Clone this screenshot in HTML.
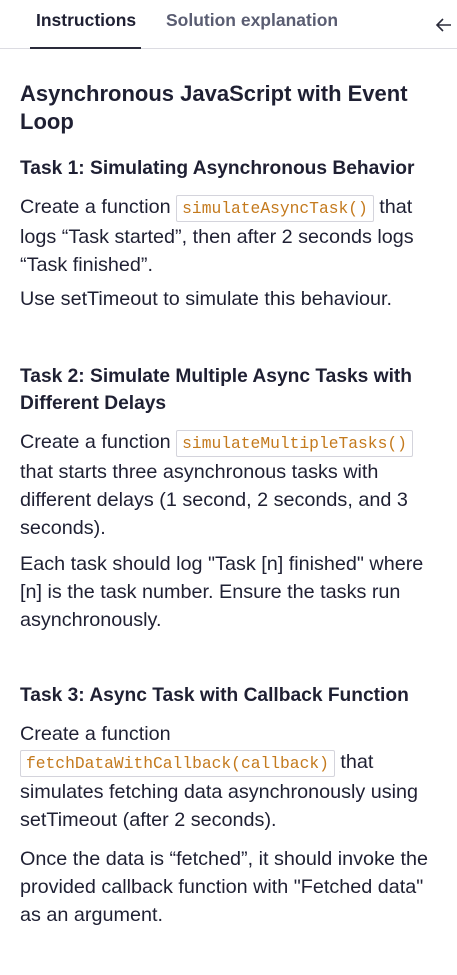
<!DOCTYPE html>
<html><head><meta charset="utf-8"><style>
body{margin:0;width:457px;height:975px;background:#fff;font-family:"Liberation Sans",sans-serif;color:#1f2033;position:relative;overflow:hidden}
.a{position:absolute;left:20px;white-space:nowrap}
.p{font-size:19.8px;line-height:28px}
.h{font-size:19.2px;font-weight:bold;line-height:27px}
code{font-family:"Liberation Mono",monospace;font-size:16.3px;color:#c47a1e;border:1px solid #d4d4dc;border-radius:2px;padding:3px 5px;background:#fff}
.tab{position:absolute;top:10px;font-size:17.5px;font-weight:bold}
</style></head><body>
<div class="tab" style="left:36px;color:#1f2033">Instructions</div>
<div class="tab" style="left:166px;color:#5a5d72">Solution explanation</div>
<svg style="position:absolute;left:434px;top:15px" width="20" height="20" viewBox="0 0 20 20"><path d="M17 10H3M9 4L3 10l6 6" fill="none" stroke="#2a2b3a" stroke-width="1.6"/></svg>
<div style="position:absolute;left:0;top:48px;width:457px;height:1px;background:#dcdce2"></div>
<div style="position:absolute;left:30px;top:47px;width:111px;height:2px;background:#2a2b3a"></div>
<div class="a" style="top:80px;font-size:22px;font-weight:bold;line-height:28px">Asynchronous JavaScript with Event<br>Loop</div>
<div class="a h" style="top:155px">Task 1: Simulating Asynchronous Behavior</div>
<div class="a p" style="top:193px">Create a function <code>simulateAsyncTask()</code> that<br>logs “Task started”, then after 2 seconds logs<br>“Task finished”.</div>
<div class="a p" style="top:285px">Use setTimeout to simulate this behaviour.</div>
<div class="a h" style="top:363px">Task 2: Simulate Multiple Async Tasks with<br>Different Delays</div>
<div class="a p" style="top:428px">Create a function <code>simulateMultipleTasks()</code><br>that starts three asynchronous tasks with<br>different delays (1 second, 2 seconds, and 3<br>seconds).</div>
<div class="a p" style="top:550px">Each task should log "Task [n] finished" where<br>[n] is the task number. Ensure the tasks run<br>asynchronously.</div>
<div class="a h" style="top:682px">Task 3: Async Task with Callback Function</div>
<div class="a p" style="top:720px">Create a function<br><code>fetchDataWithCallback(callback)</code> that<br>simulates fetching data asynchronously using<br>setTimeout (after 2 seconds).</div>
<div class="a p" style="top:845px">Once the data is “fetched”, it should invoke the<br>provided callback function with "Fetched data"<br>as an argument.</div>
</body></html>
